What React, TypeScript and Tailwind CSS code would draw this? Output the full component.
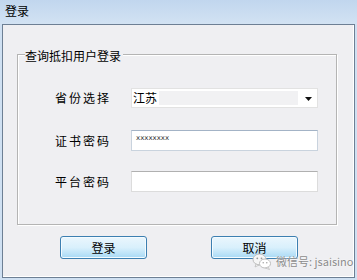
const font = "font-['SimSun','Noto_Sans_CJK_SC',sans-serif]";

const Field = ({ label, children }: { label: string; children: React.ReactNode }) => (
  <div className="flex items-center h-full">
    <span className="w-[76px] text-[12px] tracking-[2px] text-black leading-none">{label}</span>
    {children}
  </div>
);

const WinButton = ({ text }: { text: string }) => (
  <button className="w-[87px] h-[23px] rounded-[3px] border border-[#3c7fb1] bg-gradient-to-b from-[#eaf6fd] via-[#d9f0fc] to-[#a7d9f5] shadow-[inset_0_0_0_1px_#f4fbff] text-[12px] text-black leading-none flex items-center justify-center">
    {text}
  </button>
);

const WeChat = () => (
  <svg width="20" height="17" viewBox="0 0 20 17">
    <ellipse cx="7.5" cy="6.5" rx="6.5" ry="5.5" fill="#f6f6f6" stroke="#bdbdbd" strokeWidth="1" />
    <path d="M4 11 L3 14 L7 12 Z" fill="#f6f6f6" stroke="#bdbdbd" strokeWidth="0.8" />
    <ellipse cx="13" cy="10.5" rx="5.5" ry="4.5" fill="#ffffff" stroke="#bdbdbd" strokeWidth="1" />
    <path d="M16 14 L17.5 16.5 L13.5 15 Z" fill="#ffffff" stroke="#bdbdbd" strokeWidth="0.8" />
    <circle cx="5.3" cy="5.3" r="0.9" fill="#9a9a9a" />
    <circle cx="9.5" cy="5.3" r="0.9" fill="#9a9a9a" />
    <circle cx="11.2" cy="9.8" r="0.7" fill="#9a9a9a" />
    <circle cx="14.8" cy="9.8" r="0.7" fill="#9a9a9a" />
  </svg>
);

export default function App() {
  return (
    <div className={`${font} relative w-[357px] h-[280px] bg-[#cfe0f2] flex flex-col px-[2px] pb-[2px] overflow-hidden`}>
      <div className="h-[24px] shrink-0 flex items-center pb-[2px] bg-gradient-to-b from-[#c1d6ee] to-[#d2e2f3] -mx-[2px] px-[5px]">
        <span className="text-[12px] text-black leading-none">登录</span>
      </div>

      <div className="flex-1 border border-[#6d7f94] bg-[#efeff2] shadow-[inset_-1px_-1px_0_#ffffff]">
        {/* group box */}
        <div className="relative ml-[14px] mt-[29px] w-[320px] h-[171px] border border-[#b4b4b4] shadow-[inset_1px_1px_0_#ffffff,1px_1px_0_#ffffff]">
          <span className="absolute left-[7px] top-[-6px] bg-[#efeff2] pr-[2px] text-[12px] leading-[14px] text-black">
            查询抵扣用户登录
          </span>

          <div className="pl-[37px] pt-[33px] flex flex-col">
            <div className="h-[20px]">
              <Field label="省份选择">
                <div className="relative w-[187px] h-[20px] bg-white border border-[#e2e2e2] flex items-center pl-[1px]">
                  <span className="text-[12px] leading-none text-black">江苏</span>
                  <div className="ml-[2px] w-[139px] h-[14px] bg-[#f1f1f3]" />
                  <svg className="absolute right-[5px] top-[8px]" width="7" height="4" viewBox="0 0 7 4">
                    <path d="M0 0 H7 L3.5 4 Z" fill="#111" />
                  </svg>
                </div>
              </Field>
            </div>

            <div className="h-[21px] mt-[22px]">
              <Field label="证书密码">
                <div className="w-[187px] h-[21px] bg-white border border-[#c9d3de] border-t-[#a3b3c6] flex items-center pl-[4px] pb-[5px]">
                  <span className="text-[7px] leading-none text-[#333] font-['DejaVu_Sans',sans-serif]">xxxxxxxx</span>
                </div>
              </Field>
            </div>

            <div className="h-[21px] mt-[20px]">
              <Field label="平台密码">
                <div className="w-[187px] h-[21px] bg-white border border-[#dcdcdc] border-t-[#b0b0b0]" />
              </Field>
            </div>
          </div>
        </div>

        <div className="flex pl-[57px] gap-[64px] mt-[11px]">
          <WinButton text="登录" />
          <WinButton text="取消" />
        </div>
      </div>

      <div className="absolute left-[252px] top-[253px] flex items-center gap-[4px]">
        <WeChat />
        <span className="text-[11px] leading-none text-[#8c8c8c] [text-shadow:0_0_2px_#ffffff] font-['Noto_Sans_CJK_SC',sans-serif]">
          微信号: jsaisino
        </span>
      </div>
    </div>
  );
}
